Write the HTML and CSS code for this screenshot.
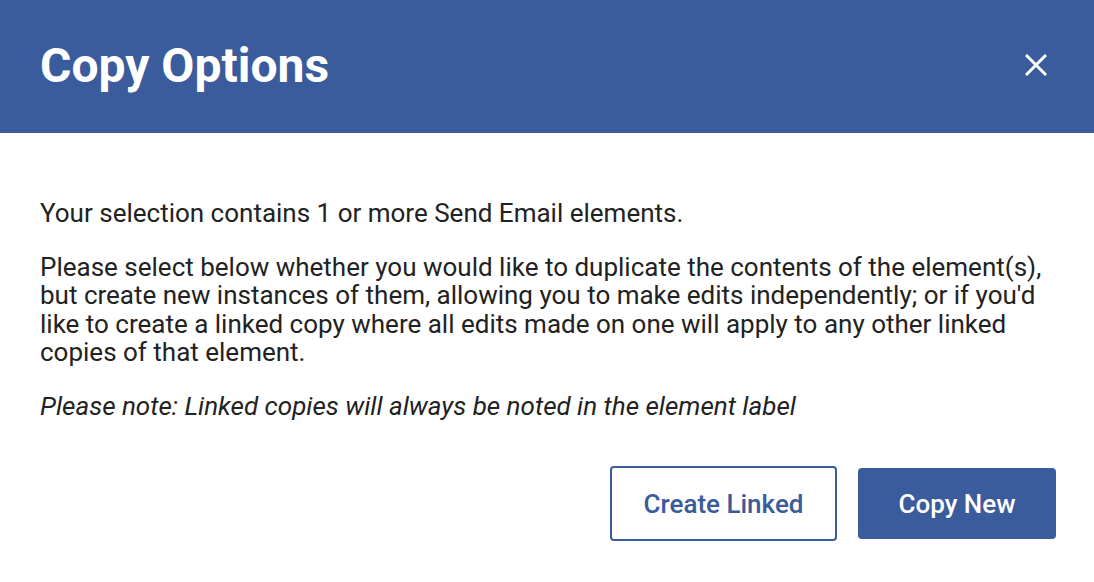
FILE: index.html
```html
<!DOCTYPE html>
<html>
<head>
<meta charset="utf-8">
<link rel="stylesheet" href="styles.css">
</head>
<body>
<div class="dialog">
  <header class="dialog-header">
    <h1 class="dialog-title">Copy Options</h1>
    <button class="close-btn" aria-label="Close">
      <svg width="22" height="22" viewBox="0 0 22 22"><path d="M2 2 L20 20 M20 2 L2 20" stroke="#fff" stroke-width="3" stroke-linecap="square"/></svg>
    </button>
  </header>
  <div class="dialog-body">
    <p class="para">Your selection contains 1 or more Send Email elements.</p>
    <p class="para">Please select below whether you would like to duplicate the contents of the element(s), but create new instances of them, allowing you to make edits independently; or if you'd like to create a linked copy where all edits made on one will apply to any other linked copies of that element.</p>
    <p class="para note">Please note: Linked copies will always be noted in the element label</p>
  </div>
  <div class="dialog-actions">
    <button class="btn btn-outline">Create Linked</button>
    <button class="btn btn-primary">Copy New</button>
  </div>
</div>
</body>
</html>
```

FILE: styles.css
```css
html, body {
  margin: 0;
  padding: 0;
  background: #fff;
}
body {
  font-family: Roboto, "Liberation Sans", sans-serif;
  width: 1094px;
  height: 582px;
  overflow: hidden;
}
.dialog {
  display: flex;
  flex-direction: column;
}
.dialog-header {
  background: #3a5c9c;
  height: 133px;
  display: flex;
  align-items: center;
  justify-content: space-between;
  padding: 0 47px 0 40px;
  box-sizing: border-box;
}
.dialog-title {
  margin: 0;
  color: #fff;
  font-size: 48px;
  font-weight: 700;
  margin-top: -2px;
}
.close-btn {
  background: none;
  border: none;
  padding: 0;
  width: 22px;
  height: 22px;
  display: flex;
  margin-top: -4px;
}
.dialog-body {
  padding: 66px 40px 0 40px;
}
.para {
  margin: 0 0 25px 0;
  font-size: 26px;
  line-height: 28.5px;
  color: #222;
}
.para:last-child {
  margin-bottom: 0;
}
.note {
  font-style: italic;
}
.dialog-actions {
  display: flex;
  justify-content: flex-end;
  align-items: center;
  gap: 21px;
  padding: 46px 38px 0 0;
}
.btn {
  font-family: Roboto, "Liberation Sans", sans-serif;
  font-size: 26px;
  font-weight: 500;
  border-radius: 4px;
  box-sizing: border-box;
  display: flex;
  align-items: center;
  justify-content: center;
}
.btn-outline {
  width: 227px;
  height: 75px;
  background: #fff;
  color: #3a5c9c;
  border: 2px solid #3a5c9c;
}
.btn-primary {
  width: 198px;
  height: 71px;
  background: #3a5c9c;
  color: #fff;
  border: none;
}
```
